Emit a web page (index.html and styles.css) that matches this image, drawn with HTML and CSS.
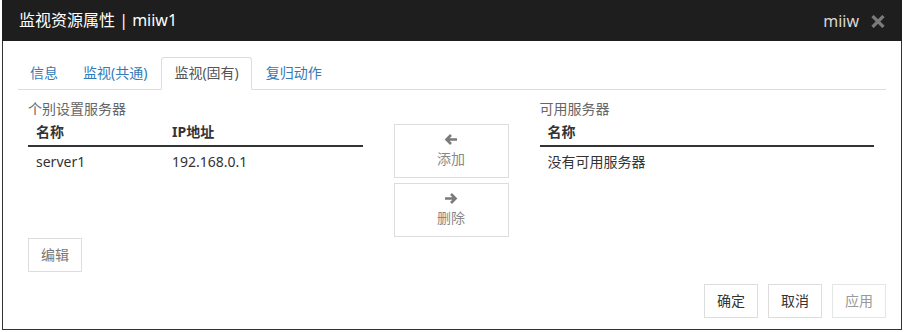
FILE: index.html
```html
<!DOCTYPE html>
<html lang="zh-CN">
<head>
    <meta charset="UTF-8">
    <meta name="viewport" content="width=device-width, initial-scale=1.0">
    <title>监视资源属性</title>
    <link rel="stylesheet" href="styles.css">
</head>
<body>
    <div class="dialog">
        <div class="dialog-header">
            <h4 class="dialog-title">监视资源属性 | miiw1</h4>
            <div class="dialog-tools">
                <span class="host">miiw</span>
                <button class="close" type="button">
                    <svg width="14" height="13" viewBox="0 0 14 13"><path d="M1.5 1 L12.5 12 M12.5 1 L1.5 12" stroke="#7a7a7a" stroke-width="3.2" fill="none"/></svg>
                </button>
            </div>
        </div>

        <div class="dialog-body">
            <ul class="tabs">
                <li><a>信息</a></li>
                <li><a>监视(共通)</a></li>
                <li class="active"><a>监视(固有)</a></li>
                <li><a>复归动作</a></li>
            </ul>

            <div class="tab-pane">
                <div class="servers">
                    <div class="server-col">
                        <div class="caption">个别设置服务器</div>
                        <table class="server-table">
                            <thead>
                                <tr><th class="col-name">名称</th><th>IP地址</th></tr>
                            </thead>
                            <tbody>
                                <tr><td>server1</td><td>192.168.0.1</td></tr>
                            </tbody>
                        </table>
                    </div>

                    <div class="move-buttons">
                        <button class="btn btn-move" type="button">
                            <svg width="14" height="11" viewBox="0 0 14 11"><path d="M13 5.5 H2.5 M7 1 L2.5 5.5 L7 10" stroke="#7a7a7a" stroke-width="2.6" fill="none"/></svg>
                            <span>添加</span>
                        </button>
                        <button class="btn btn-move" type="button">
                            <svg width="14" height="11" viewBox="0 0 14 11"><path d="M1 5.5 H11.5 M7 1 L11.5 5.5 L7 10" stroke="#7a7a7a" stroke-width="2.6" fill="none"/></svg>
                            <span>删除</span>
                        </button>
                    </div>

                    <div class="server-col">
                        <div class="caption">可用服务器</div>
                        <table class="server-table">
                            <thead>
                                <tr><th>名称</th></tr>
                            </thead>
                            <tbody>
                                <tr><td>没有可用服务器</td></tr>
                            </tbody>
                        </table>
                    </div>
                </div>
                <button class="btn btn-edit" type="button">编辑</button>
            </div>
        </div>

        <div class="dialog-footer">
            <button class="btn btn-default" type="button">确定</button>
            <button class="btn btn-default" type="button">取消</button>
            <button class="btn btn-default" type="button" disabled>应用</button>
        </div>
    </div>
</body>
</html>
```

FILE: styles.css
```css
* {margin: 0; padding: 0; box-sizing: border-box;}
body {background-color: #FFFFFF; color: #333333; font-family: "Noto Sans", "Noto Sans CJK SC", sans-serif; font-size: 14px; line-height: 20px;}
li {list-style-type: none;}
button {font-family: inherit; font-size: 14px; line-height: 20px; background-color: #FFFFFF; cursor: pointer;}

.dialog {width: 900px; height: 330px; margin: 0 2px; border: 1px solid #333333; border-top: none; display: flex; flex-direction: column;}

.dialog-header {height: 41px; margin: 0 -1px; background-color: #1e1e1e; color: #FFFFFF; padding: 0 17px 0 17px; display: flex; align-items: center; justify-content: space-between;}
.dialog-title {font-size: 16px; font-weight: 400; line-height: 22px; padding-bottom: 1px;}
.dialog-tools {display: flex; align-items: center; gap: 12px;}
.dialog-tools .host {font-size: 16px; font-weight: 400; color: #d8d8d8; line-height: 22px;}
.dialog-tools .close {border: none; background: transparent; display: flex; padding-top: 1px;}

.dialog-body {padding: 16px 15px 0 15px;}

.tabs {display: flex; border-bottom: 1px solid #dddddd;}
.tabs li {margin-bottom: -1px; margin-right: 2px;}
.tabs li a {display: block; padding: 5px 11px 6px; border: 1px solid transparent; border-radius: 3px 3px 0 0; color: #337ab7; line-height: 20px;}
.tabs li:first-child a {padding-right: 10px;}
.tabs li.active a {border-color: #dddddd; border-bottom-color: #FFFFFF; color: #555555; padding: 5px 12px 6px;}

.tab-pane {padding: 9px 12px 0 10px;}
.servers {display: grid; grid-template-columns: 1fr 115px 1fr; column-gap: 31px;}
.caption {color: #666666; line-height: 20px;}

.server-table {width: 100%; border-collapse: collapse;}
.server-table th {text-align: left; font-weight: 700; padding: 3px 8px; line-height: 20px; border-bottom: 2px solid #333333;}
.server-table th.col-name {width: 136px;}
.server-table td {padding: 5px 8px; line-height: 20px;}

.btn {border: 1px solid #dddddd; padding: 6px 12px; color: #333333; border-radius: 0;}
.move-buttons {padding-top: 25px; display: flex; flex-direction: column; gap: 5px;}
.btn-move {height: 54px; padding: 9px 0 0; display: flex; flex-direction: column; align-items: center; gap: 4px; color: #888888;}
.btn-move svg {display: block;}
.btn-edit {margin-top: 1px; color: #777777;}

.dialog-footer {margin-top: auto; padding: 0 15px 11px; display: flex; justify-content: flex-end; gap: 10px;}
.btn-default[disabled] {color: #999999; border-color: #e6e6e6; cursor: default;}
```
